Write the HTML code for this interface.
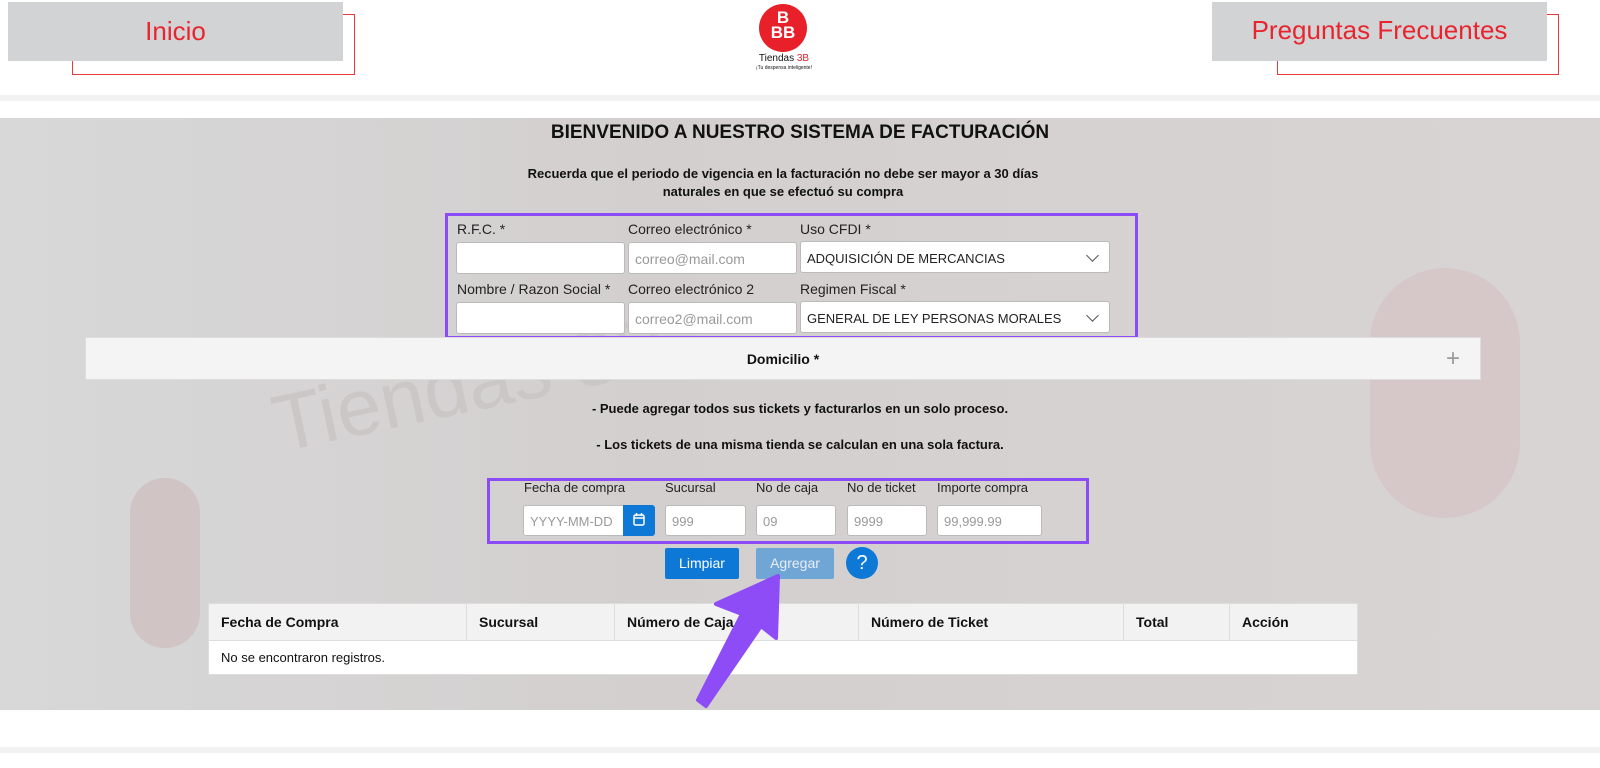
<!DOCTYPE html>
<html><head><meta charset="utf-8"><style>
*{box-sizing:border-box;margin:0;padding:0}
body{width:1600px;height:768px;overflow:hidden;background:#fff;font-family:"Liberation Sans",sans-serif;position:relative;color:#111}
.abs{position:absolute}
.lbl{position:absolute;font-size:14px;color:#222}
.inp{position:absolute;background:#fff;border:1px solid #bbb;border-radius:3px;font-size:14px;color:#999;padding:8px 6px 0}
.sel{color:#222;font-size:13px}
.chev{position:absolute;right:12px;top:9px;width:9px;height:9px;border-right:1.5px solid #555;border-bottom:1.5px solid #555;transform:rotate(45deg)}
th,td{text-align:left;font-size:14px;padding:0 12px}
</style></head><body>
<div class="abs" style="left:72px;top:14px;width:283px;height:61px;border:1px solid #e83a3a"></div>
<div class="abs" style="left:8px;top:2px;width:335px;height:59px;background:#d2d3d5;color:#e8252f;font-size:26px;text-align:center;line-height:58px">Inicio</div>
<div class="abs" style="left:1277px;top:14px;width:282px;height:61px;border:1px solid #e83a3a"></div>
<div class="abs" style="left:1212px;top:2px;width:335px;height:59px;background:#d2d3d5;color:#e8252f;font-size:26px;text-align:center;line-height:56px">Preguntas Frecuentes</div>
<div class="abs" style="left:759px;top:4px;width:48px;height:48px;border-radius:50%;background:#e8202a;color:#fff;font-weight:bold;font-size:17px;text-align:center;line-height:15px;padding-top:6px">B<br>BB</div>
<div class="abs" style="left:752px;top:53px;width:64px;text-align:center;font-size:10px">Tiendas <span style="color:#e8202a">3B</span></div>
<div class="abs" style="left:748px;top:65px;width:72px;text-align:center;font-size:5px">¡Tu despensa inteligente!</div>
<div class="abs" style="left:0;top:95px;width:1600px;height:6px;background:#f2f2f2"></div>
<div class="abs" style="left:0;top:118px;width:1600px;height:592px;background:linear-gradient(90deg,#d8d8d8,#d3cfcf 40%,#d6d2d2 70%,#d9d4d4);overflow:hidden">
 <div class="abs" style="left:270px;top:220px;font-size:80px;color:#cbc7c7;transform:rotate(-12deg)">Tiendas 3B</div>
 <div class="abs" style="left:130px;top:360px;width:70px;height:170px;border-radius:35px;background:#d0c4c4"></div>
 <div class="abs" style="left:1370px;top:150px;width:150px;height:250px;border-radius:75px;background:#d6c8c8"></div>
</div>
<div class="abs" style="left:0;top:122px;width:1600px;text-align:center;font-size:19px;font-weight:bold">BIENVENIDO A NUESTRO SISTEMA DE FACTURACIÓN</div>
<div class="abs" style="left:500px;top:165px;width:566px;text-align:center;font-size:13px;font-weight:bold;line-height:18px">Recuerda que el periodo de vigencia en la facturación no debe ser mayor a 30 días<br>naturales en que se efectuó su compra</div>
<div class="abs" style="left:445px;top:213px;width:693px;height:126px;border:3px solid #8b4cf7"></div>
<div class="lbl" style="left:457px;top:221px">R.F.C. *</div>
<div class="lbl" style="left:628px;top:221px">Correo electrónico *</div>
<div class="lbl" style="left:800px;top:221px">Uso CFDI *</div>
<div class="inp" style="left:456px;top:242px;width:169px;height:32px"></div>
<div class="inp" style="left:628px;top:242px;width:169px;height:32px">correo@mail.com</div>
<div class="inp sel" style="left:800px;top:241px;width:310px;height:32px;padding-top:9px">ADQUISICIÓN DE MERCANCIAS<span class="chev"></span></div>
<div class="lbl" style="left:457px;top:281px">Nombre / Razon Social *</div>
<div class="lbl" style="left:628px;top:281px">Correo electrónico 2</div>
<div class="lbl" style="left:800px;top:281px">Regimen Fiscal *</div>
<div class="inp" style="left:456px;top:302px;width:169px;height:32px"></div>
<div class="inp" style="left:628px;top:302px;width:169px;height:32px">correo2@mail.com</div>
<div class="inp sel" style="left:800px;top:301px;width:310px;height:32px;padding-top:9px">GENERAL DE LEY PERSONAS MORALES<span class="chev"></span></div>
<div class="abs" style="left:85px;top:337px;width:1396px;height:43px;background:#f4f4f4;border:1px solid #ddd;text-align:center;line-height:42px;font-size:14px;font-weight:bold">Domicilio *<span style="position:absolute;right:20px;font-weight:normal;font-size:24px;color:#999">+</span></div>
<div class="abs" style="left:0;top:401px;width:1600px;text-align:center;font-size:13px;font-weight:bold">- Puede agregar todos sus tickets y facturarlos en un solo proceso.</div>
<div class="abs" style="left:0;top:437px;width:1600px;text-align:center;font-size:13px;font-weight:bold">- Los tickets de una misma tienda se calculan en una sola factura.</div>
<div class="abs" style="left:487px;top:478px;width:602px;height:66px;border:3px solid #8b4cf7"></div>
<div class="lbl" style="left:524px;top:480px;font-size:13px">Fecha de compra</div>
<div class="lbl" style="left:665px;top:480px;font-size:13px">Sucursal</div>
<div class="lbl" style="left:756px;top:480px;font-size:13px">No de caja</div>
<div class="lbl" style="left:847px;top:480px;font-size:13px">No de ticket</div>
<div class="lbl" style="left:937px;top:480px;font-size:13px">Importe compra</div>
<div class="inp" style="left:523px;top:505px;width:102px;height:31px;font-size:13px">YYYY-MM-DD</div>
<div class="abs" style="left:623px;top:505px;width:32px;height:31px;background:#0d78d6;border-radius:0 3px 3px 0"><svg width="32" height="31" viewBox="0 0 32 31"><rect x="11" y="10" width="10" height="10" rx="1.5" fill="none" stroke="#fff" stroke-width="1.5"/><path d="M11 13h10M13.5 8v3M18.5 8v3" stroke="#fff" stroke-width="1.5"/></svg></div>
<div class="inp" style="left:665px;top:505px;width:81px;height:31px;font-size:13px">999</div>
<div class="inp" style="left:756px;top:505px;width:80px;height:31px;font-size:13px">09</div>
<div class="inp" style="left:847px;top:505px;width:80px;height:31px;font-size:13px">9999</div>
<div class="inp" style="left:937px;top:505px;width:105px;height:31px;font-size:13px">99,999.99</div>
<div class="abs" style="left:665px;top:548px;width:74px;height:31px;background:#0d78d6;color:#fff;font-size:14px;text-align:center;line-height:31px;border-radius:2px">Limpiar</div>
<div class="abs" style="left:756px;top:548px;width:78px;height:31px;background:#6fa6d6;color:#e8eef5;font-size:14px;text-align:center;line-height:31px;border-radius:2px">Agregar</div>
<div class="abs" style="left:846px;top:547px;width:32px;height:32px;border-radius:50%;background:#0d78d6;color:#fff;font-size:20px;text-align:center;line-height:32px">?</div>
<table class="abs" style="left:208px;top:603px;width:1150px;border-collapse:collapse;background:#fff">
<tr style="height:37px;background:#f2f2f2"><th style="width:258px;border:1px solid #ddd">Fecha de Compra</th><th style="width:148px;border:1px solid #ddd">Sucursal</th><th style="width:244px;border:1px solid #ddd">Número de Caja</th><th style="width:265px;border:1px solid #ddd">Número de Ticket</th><th style="width:106px;border:1px solid #ddd">Total</th><th style="border:1px solid #ddd">Acción</th></tr>
<tr style="height:34px"><td colspan="6" style="border:1px solid #ddd;font-size:13px">No se encontraron registros.</td></tr>
</table>
<div class="abs" style="left:0;top:747px;width:1600px;height:6px;background:#f2f2f2"></div>
<svg class="abs" style="left:0;top:0" width="1600" height="768"><polygon points="778,576 776,638 761,626 706,706 698,700 742,614 716,604" fill="#8d4cf6" stroke="#8d4cf6" stroke-linejoin="round" stroke-width="4"/></svg>
</body></html>
